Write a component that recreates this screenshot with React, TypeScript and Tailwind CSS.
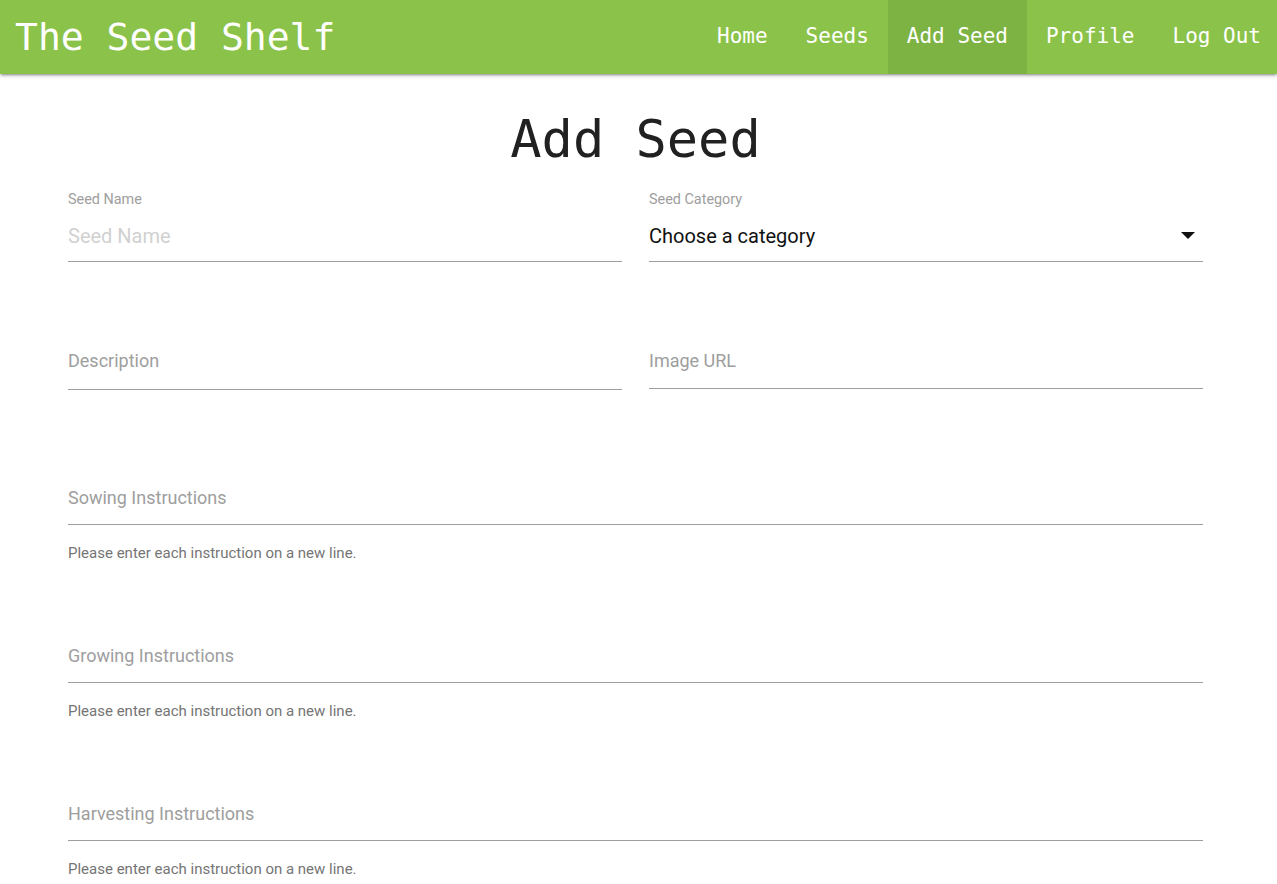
import React from 'react';

const navLinks = ['Home', 'Seeds', 'Add Seed', 'Profile', 'Log Out'];

const mono = { fontFamily: '"DejaVu Sans Mono", "Liberation Mono", monospace' };

function NavBar() {
  return (
    <header
      className="h-[74px] bg-[#8bc34a] flex items-center justify-between text-white shadow-[0_2px_2px_0_rgba(0,0,0,0.14),0_3px_1px_-2px_rgba(0,0,0,0.12),0_1px_5px_0_rgba(0,0,0,0.2)] relative z-10"
      style={mono}
    >
      <span className="pl-[15px] text-[38px] leading-none">The Seed Shelf</span>
      <nav className="flex h-full">
        {navLinks.map((link) => (
          <a
            key={link}
            className={`h-full flex items-center px-[19px] text-[21px] last:pr-[16px] ${
              link === 'Add Seed' ? 'bg-[#7cb342]' : ''
            }`}
          >
            {link}
          </a>
        ))}
      </nav>
    </header>
  );
}

function InstructionField({ label, first }: { label: string; first?: boolean }) {
  return (
    <div className={first ? 'mt-[81px]' : 'mt-[66px]'}>
      <div className="h-[54px] flex items-center border-b border-[#9e9e9e] text-[18px] text-[#9e9e9e]">
        {label}
      </div>
      <p className="mt-[18px] h-[20px] leading-[20px] text-[15px] text-[#757575]">
        Please enter each instruction on a new line.
      </p>
    </div>
  );
}

export default function App() {
  return (
    <div className="min-h-screen bg-white" style={{ fontFamily: 'Roboto, "Noto Sans", sans-serif' }}>
      <NavBar />

      <main className="pl-[68px] pr-[74px] pb-10">
        <h2 className="mt-[39px] text-center text-[52px] leading-[52px] text-[#212121]" style={mono}>
          Add Seed
        </h2>

        {/* first row: name and category */}
        <div className="grid grid-cols-2 gap-[27px] mt-[25px]">
          <div>
            <label className="block h-[20px] leading-[20px] text-[14.4px] text-[#9e9e9e]">Seed Name</label>
            <div className="h-[52px] flex items-center border-b border-[#9e9e9e] text-[20px] text-[#d1d1d1]">
              Seed Name
            </div>
          </div>
          <div>
            <label className="block h-[20px] leading-[19px] text-[14.4px] text-[#9e9e9e]">Seed Category</label>
            <div className="h-[52px] flex items-center justify-between border-b border-[#9e9e9e] text-[20px] text-[#111]">
              <span>Choose a category</span>
              <svg width="14" height="7" viewBox="0 0 14 7" className="mr-[8px]">
                <path d="M0 0 L14 0 L7 7 Z" fill="#111" />
              </svg>
            </div>
          </div>
        </div>

        {/* second row: description and image */}
        <div className="grid grid-cols-2 gap-[27px] mt-[70px]">
          <div className="h-[58px] flex items-center border-b border-[#9e9e9e] text-[18px] text-[#9e9e9e]">
            Description
          </div>
          <div className="h-[57px] flex items-center border-b border-[#9e9e9e] text-[18px] text-[#9e9e9e]">
            Image URL
          </div>
        </div>

        <div>
          <InstructionField label="Sowing Instructions" first />
          <InstructionField label="Growing Instructions" />
          <InstructionField label="Harvesting Instructions" />
        </div>
      </main>
    </div>
  );
}
